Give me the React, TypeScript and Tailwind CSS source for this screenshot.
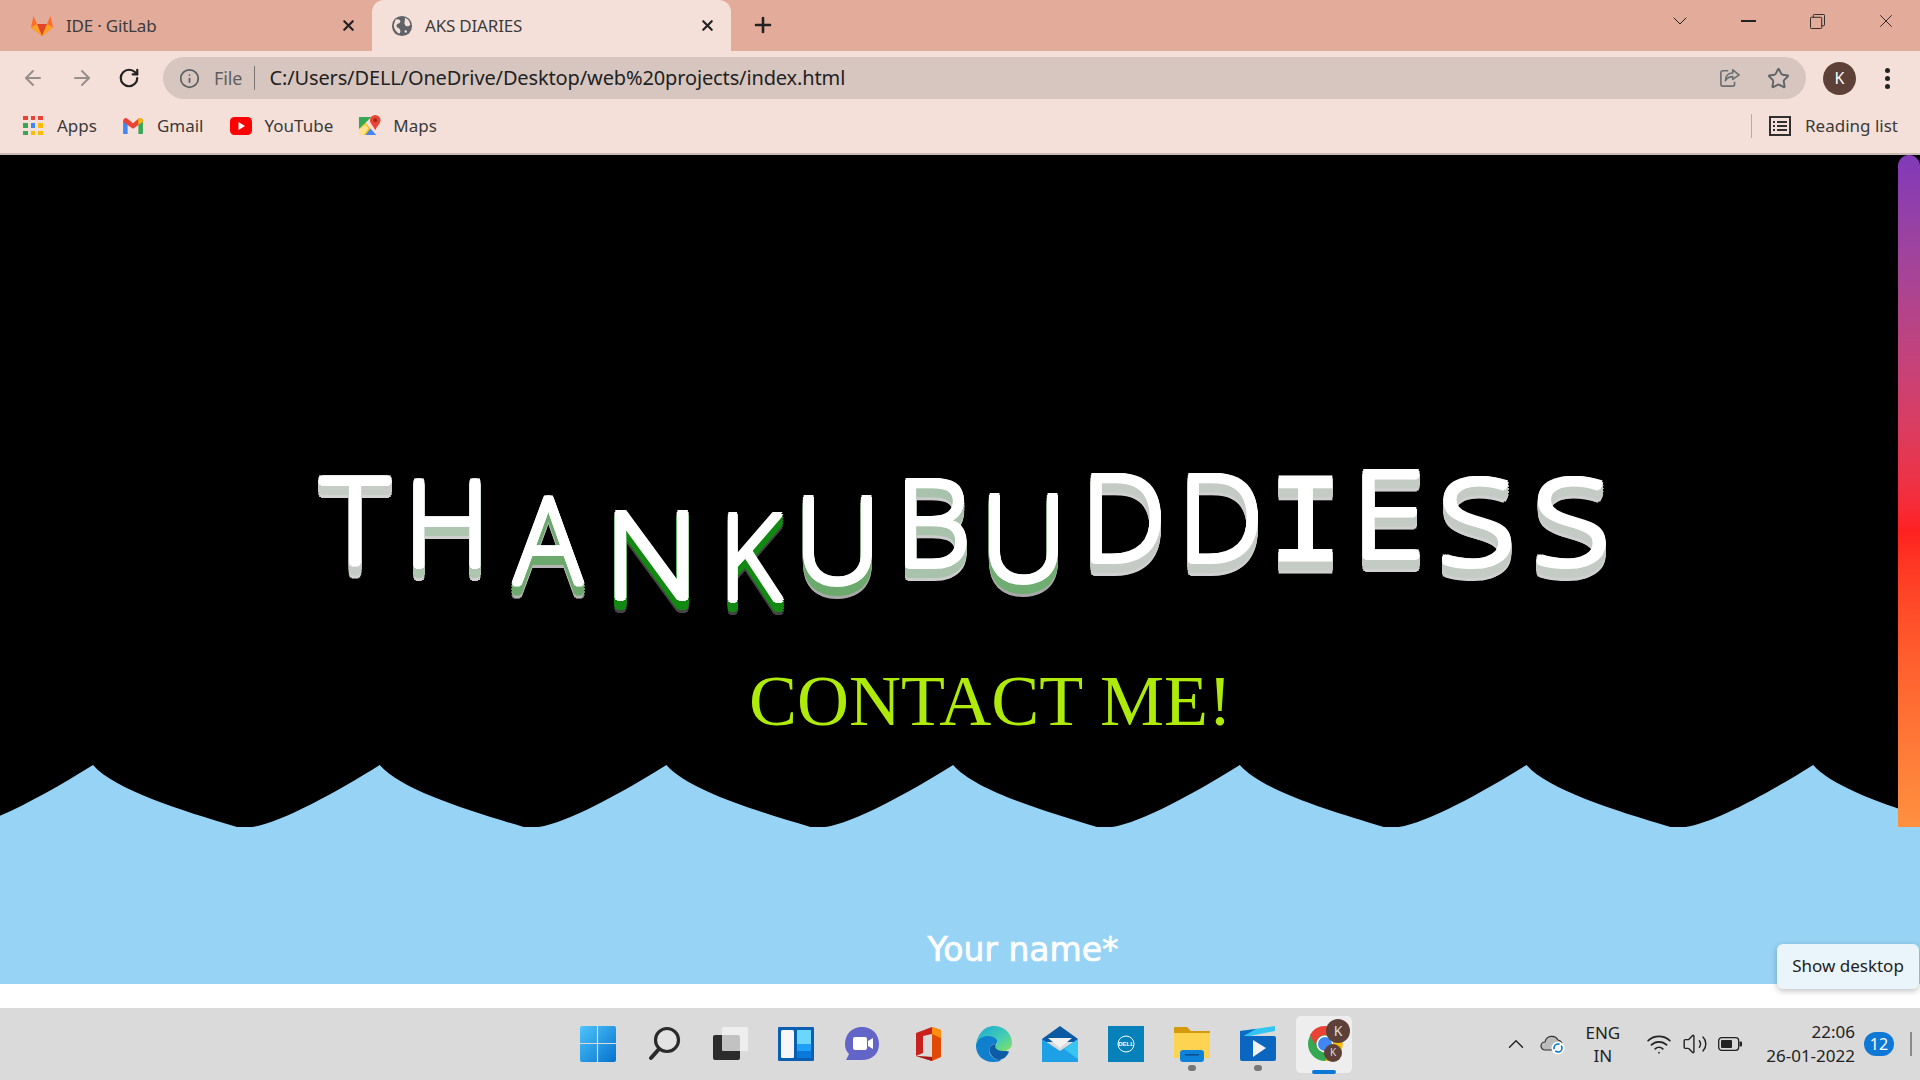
import { ArrowLeft, ArrowRight, ChevronDown, ChevronUp, Info, Plus, RotateCw, Star, Volume2, Wifi, X } from "lucide-react";

const letters = [
  { ch: "T", cls: "w-[78px] mt-[6px] scale-x-[1.1] [--c:#c5cbc5] [--g:#d4d4d4]" },
  { ch: "H", cls: "w-[76px] ml-[15px] mt-[9px] [--c:#aec5b0] [--g:#cfcfcf]" },
  { ch: "A", cls: "w-[70px] ml-[28px] mt-[26px] scale-x-[0.95] [--c:#6ca96c] [--g:#b5b5b5]" },
  { ch: "N", cls: "w-[83px] ml-[27px] mt-[41px] scale-x-[1.1] [--c:#128a12] [--g:#444444]" },
  { ch: "K", cls: "w-[59px] ml-[28px] mt-[43px] scale-x-[0.9] [--c:#128a12] [--g:#444444]" },
  { ch: "U", cls: "w-[71px] ml-[22px] mt-[26px] [--c:#6ca96c] [--g:#a8a8a8]" },
  { ch: "B", cls: "w-[58px] ml-[31px] mt-[9px] [--c:#a9c2ab] [--g:#cccccc]" },
  { ch: "U", cls: "w-[73px] ml-[25px] mt-[24px] [--c:#70ad72] [--g:#a8a8a8]" },
  { ch: "D", cls: "w-[71px] ml-[28px] mt-[4px] [--c:#c4cac4] [--g:#d0d0d0]" },
  { ch: "D", cls: "w-[71px] ml-[26px] mt-[4px] [--c:#c4cac4] [--g:#d0d0d0]" },
  { ch: "I", cls: "w-[57px] ml-[21px] mt-[16px] font-['Liberation_Mono'] text-[126px] [text-shadow:none] [-webkit-text-stroke:3px_white] [--c:#c4cac4] [--g:#d0d0d0]" },
  { ch: "E", cls: "w-[63px] ml-[23px] mt-[0px] scale-x-[1.1] [--c:#c4cac4] [--g:#d0d0d0]" },
  { ch: "S", cls: "w-[71px] ml-[21px] mt-[8px] scale-x-[1.2] [--c:#c4cac4] [--g:#d0d0d0]" },
  { ch: "S", cls: "w-[70px] ml-[24px] mt-[8px] scale-x-[1.2] [--c:#c4cac4] [--g:#d0d0d0]" },
];

// one wave period is 286.7px wide, the peak of the first one sits at x=93
const wavePath = (() => {
  let d = "M0,62 L-194,62";
  for (let i = -1; i < 7; i++) {
    const o = i * 286.7;
    d += ` L${93 + o},0 C${115 + o},25 ${180 + o},45 ${237 + o},62 L${252 + o},62 C${280 + o},58 ${335 + o},28 ${379.7 + o},0`;
  }
  return d + " L1920,62 Z";
})();

function GitlabIcon() {
  return (
    <svg viewBox="0 0 24 24" className="w-[24px] h-[24px]">
      <path d="M12 22 L1 13.5 L3.5 2 L7 10 H17 L20.5 2 L23 13.5 Z" fill="#fc6d26" />
      <path d="M12 22 L7 10 H17 Z" fill="#e24329" />
      <path d="M1 13.5 L7 10 L12 22 Z M23 13.5 L17 10 L12 22 Z" fill="#fca326" />
    </svg>
  );
}

function GlobeIcon() {
  return (
    <svg viewBox="0 0 24 24" className="w-[22px] h-[22px]">
      <circle cx="12" cy="12" r="11" fill="#5f6368" />
      <path d="M5 5 C9 4 11 6 10 8 C9 10 6 9 6 12 C6 14 9 14 10 16 C11 19 9 21 8 20 C5 18 3 14 3 11 Z M15 3 C19 4 21 8 21 11 C19 13 16 13 15 10 C14 7 16 6 15 3 Z M15 17 C17 16 18 17 17 19 C16 20 14 19 15 17 Z" fill="#f5e0d9" />
    </svg>
  );
}

function AppsIcon() {
  const colors = ["#ea4335", "#ea4335", "#ea4335", "#34a853", "#4285f4", "#fbbc05", "#34a853", "#fbbc05", "#fbbc05"];
  return (
    <div className="w-[20px] h-[20px] grid grid-cols-3 gap-[3px]">
      {colors.map((c, i) => (
        <div key={i} className="w-[4.6px] h-[4.6px]" style={{ background: c }} />
      ))}
    </div>
  );
}

function GmailIcon() {
  return (
    <svg viewBox="0 0 24 20" className="w-[22px] h-[18px]">
      <path d="M1 4 V18 a1 1 0 0 0 1 1 H6 V8 Z" fill="#4285f4" />
      <path d="M23 4 V18 a1 1 0 0 1 -1 1 H18 V8 Z" fill="#34a853" />
      <path d="M1 5 C1 1 4 0 6 2 L12 7 L18 2 C20 0 23 1 23 5 L18 9 L12 13 L6 9 Z" fill="#ea4335" />
      <path d="M18 2 C20 0 23 1 23 5 L18 9 Z" fill="#fbbc05" />
    </svg>
  );
}

function YoutubeIcon() {
  return (
    <svg viewBox="0 0 22 18" className="w-[22px] h-[18px]">
      <rect width="22" height="18" rx="4.5" fill="#f00" />
      <path d="M8.5 5 L15 9 L8.5 13 Z" fill="#fff" />
    </svg>
  );
}

function MapsIcon() {
  return (
    <svg viewBox="0 0 24 24" className="w-[23px] h-[23px]">
      <path d="M1 3 H14 L1 16 Z" fill="#34a853" />
      <path d="M1 16 L8 9 L18 22 H3 Z" fill="#fbbc05" />
      <path d="M8 22 L13 15 L19 22 Z" fill="#4285f4" />
      <path d="M1 16 L1 22 H6 L11 15 L8 11 Z" fill="#fde293" />
      <path d="M18 1 A5.5 5.5 0 0 1 23.5 6.5 C23.5 10 20 12 18 17 C16 12 12.5 10 12.5 6.5 A5.5 5.5 0 0 1 18 1 Z" fill="#ea4335" />
      <circle cx="18" cy="6.5" r="2" fill="#a52714" />
    </svg>
  );
}

function ShareIcon() {
  return (
    <svg viewBox="0 0 22 22" className="w-[22px] h-[20px]" fill="none" stroke="#6a6f70" strokeWidth="1.8" strokeLinejoin="round">
      <path d="M9 3 H3 a2 2 0 0 0 -2 2 V18 a2 2 0 0 0 2 2 H14 a2 2 0 0 0 2 -2 V15" />
      <path d="M14 2 L21 7.5 L14 12.5 V9.5 C10 9.5 7.5 11 6 14 C6 9 9 5.5 14 5.5 Z" />
    </svg>
  );
}

function ReadingListIcon() {
  return (
    <svg viewBox="0 0 22 20" className="w-[22px] h-[20px]" fill="none" stroke="#303030" strokeWidth="2">
      <rect x="1" y="1" width="20" height="18" />
      <path d="M8 6 H18 M8 10 H18 M8 14 H18 M4 6 H6 M4 10 H6 M4 14 H6" />
    </svg>
  );
}

function WinIcon() {
  return (
    <svg viewBox="0 0 36 36" className="w-[36px] h-[36px]">
      <defs>
        <linearGradient id="win" x1="0" y1="0" x2="1" y2="1">
          <stop offset="0" stopColor="#4fc4fb" />
          <stop offset="1" stopColor="#0472ce" />
        </linearGradient>
      </defs>
      <rect width="36" height="36" rx="2" fill="url(#win)" />
      <path d="M0 17.5 H36 M17.5 0 V36" stroke="#dadada" strokeWidth="1.2" />
    </svg>
  );
}

function SearchIcon() {
  return (
    <svg viewBox="0 0 36 36" className="w-[36px] h-[36px]" fill="none" stroke="#2b2b2b">
      <circle cx="21" cy="14" r="11.5" strokeWidth="3.2" fill="#e3e3e3" />
      <path d="M13 23 L5 32" strokeWidth="4" strokeLinecap="round" />
    </svg>
  );
}

function TaskViewIcon() {
  return (
    <svg viewBox="0 0 36 36" className="w-[36px] h-[36px]">
      <rect x="1" y="9" width="27" height="25" rx="2" fill="#2c2c2c" />
      <rect x="10" y="1" width="26" height="24" rx="1" fill="#f4f4f4" fillOpacity="0.75" />
    </svg>
  );
}

function WidgetsIcon() {
  return (
    <svg viewBox="0 0 36 36" className="w-[36px] h-[36px]">
      <rect width="36" height="34" y="1" rx="1" fill="#0c5fb0" />
      <rect x="3" y="4" width="13" height="28" rx="1.5" fill="#f7f7f7" />
      <rect x="19" y="4" width="14" height="14" fill="#6bd7ff" />
      <rect x="19" y="18" width="14" height="7" fill="#1e9ef5" />
      <rect x="19" y="25" width="14" height="7" fill="#0a78dc" />
    </svg>
  );
}

function ChatIcon() {
  return (
    <svg viewBox="0 0 36 36" className="w-[36px] h-[36px]">
      <path d="M18 1 C28 1 35 8 35 18 C35 28 28 34 18 34 H2 L5 28 C2 25 1 22 1 18 C1 8 8 1 18 1 Z" fill="#6264c8" />
      <rect x="9" y="11" width="14" height="13" rx="2" fill="#fff" />
      <path d="M24 15 L29 12 V23 L24 20 Z" fill="#fff" />
    </svg>
  );
}

function OfficeIcon() {
  return (
    <svg viewBox="0 0 30 36" className="w-[30px] h-[36px]">
      <path d="M19 1 L28 4 V31 L19 35 L3 30 L19 31 Z" fill="#e04a06" />
      <path d="M19 1 L28 4 V12 L19 8 Z" fill="#ff8f10" />
      <path d="M19 1 L3 7 V30 L10 27 V10 L19 8 Z" fill="#c9211e" />
      <path d="M3 30 L19 35 V31 Z" fill="#a01a20" />
    </svg>
  );
}

function EdgeIcon() {
  return (
    <svg viewBox="0 0 36 36" className="w-[36px] h-[36px]">
      <defs>
        <linearGradient id="edge" x1="0" y1="0" x2="1" y2="1">
          <stop offset="0" stopColor="#1ba5d8" />
          <stop offset="0.6" stopColor="#46cfb0" />
          <stop offset="1" stopColor="#86e05a" />
        </linearGradient>
      </defs>
      <path d="M18 0 C29 0 36 8 36 17 C36 22 32 25 27 25 C22 25 19 24 19 21 C19 19 22 18 21 15 C19 11 13 11 8 14 C4 16 1 19 0 22 C0 9 8 0 18 0 Z" fill="url(#edge)" />
      <path d="M0 20 C1 11 10 8 17 11 C22 13 22 16 20 18 C14 18 12 23 14 28 C16 32 22 35 26 34 C22 36 19 36 17 36 C7 36 0 29 0 20 Z" fill="#0f7fce" />
      <path d="M14 27 C12 22 15 18 20 18 C18 21 20 25 27 25 C30 25 33 25 33 26 C30 32 26 34 22 34 C19 33 16 31 14 27 Z" fill="#0d5ca8" />
    </svg>
  );
}

function MailIcon() {
  return (
    <svg viewBox="0 0 36 36" className="w-[36px] h-[36px]">
      <path d="M0 13 L18 0 L36 13 V16 H0 Z" fill="#0c59a4" />
      <path d="M6 12 H30 L18 22 Z" fill="#f2f2f2" />
      <path d="M0 13 L18 25 L36 13 V36 H0 Z" fill="#1ea0e6" />
      <path d="M36 13 V33 L22 23 Z" fill="#37c6f4" />
    </svg>
  );
}

function DellIcon() {
  return (
    <svg viewBox="0 0 36 36" className="w-[36px] h-[36px]">
      <rect width="36" height="36" fill="#0681b9" />
      <circle cx="18" cy="18" r="8" fill="none" stroke="#fff" strokeWidth="1" />
      <text x="18" y="20" textAnchor="middle" fontSize="6" fontWeight="700" fill="#fff" fontFamily="Liberation Sans">DELL</text>
    </svg>
  );
}

function FolderIcon() {
  return (
    <svg viewBox="0 0 36 36" className="w-[36px] h-[36px]">
      <path d="M0 2 a1 1 0 0 1 1 -1 H13 L17 5 H36 V12 H0 Z" fill="#d59a0b" />
      <path d="M0 7 H36 V32 H0 Z" fill="#fdd451" />
      <rect x="6" y="24" width="24" height="12" rx="3" fill="#0c82d8" />
      <rect x="11" y="28" width="14" height="1.6" fill="#0a4f90" />
    </svg>
  );
}

function VideoIcon() {
  return (
    <svg viewBox="0 0 36 36" className="w-[36px] h-[36px]">
      <path d="M0 5 L35 0 V5 L0 12 Z" fill="#33c5f3" />
      <path d="M0 5 L16 3 L0 12 Z" fill="#0c6cc4" />
      <rect y="10" width="36" height="25" rx="2" fill="#0b66bf" />
      <path d="M13 14 L26 22 L13 31 Z" fill="#f2f2f2" />
    </svg>
  );
}

function ChromeIcon() {
  return (
    <div className="relative w-[56px] h-[57px] bg-[#eeeeee] rounded-[5px] flex items-center pl-[11px]">
      <svg viewBox="0 0 36 36" className="w-[36px] h-[36px]">
        <circle cx="18" cy="18" r="17" fill="#34a853" />
        <path d="M3 9 A17 17 0 0 1 33 9 H18 A9 9 0 0 0 10 22 Z" fill="#ea4335" />
        <path d="M33 9 A17 17 0 0 1 18 35 L26 22 A9 9 0 0 0 18 9 Z" fill="#fbbc05" />
        <circle cx="18" cy="18" r="8.5" fill="#fff" />
        <circle cx="18" cy="18" r="7" fill="#4285f4" />
      </svg>
      <div className="absolute top-[3px] right-[2px] w-[24px] h-[24px] rounded-full bg-[#5d4037] text-[#ddd] text-[14px] flex items-center justify-center">K</div>
      <div className="absolute bottom-[11px] right-[10px] w-[18px] h-[18px] rounded-full bg-[#5d4037] text-[#ddd] text-[10px] flex items-center justify-center">K</div>
      <div className="absolute -bottom-[1px] left-[16px] w-[24px] h-[4px] rounded-full bg-[#0a78d6]" />
    </div>
  );
}

function Dot() {
  return <div className="absolute -bottom-[9px] left-[14px] w-[8px] h-[6px] rounded-full bg-[#777777]" />;
}

export default function App() {
  return (
    <div className="relative w-full h-screen overflow-hidden flex flex-col font-['Noto_Sans',sans-serif] text-[#222222]">
      {/* tab strip */}
      <div className="h-[51px] bg-[#e3ab9a] flex items-start shrink-0">
        <div className="w-[372px] h-[51px] flex items-center pl-[30px] pr-[15px] text-[17px] text-[#3c3c3c]">
          <GitlabIcon />
          <span className="ml-[12px] flex-1 tracking-[-0.2px]">IDE · GitLab</span>
          <X size={17} strokeWidth={3} className="text-[#222222]" />
        </div>
        <div className="w-[359px] h-[51px] bg-[#f5e0d9] rounded-t-[12px] flex items-center pl-[19px] pr-[15px] text-[17px] text-[#3c3c3c]">
          <GlobeIcon />
          <span className="ml-[12px] flex-1 tracking-[-0.2px]">AKS DIARIES</span>
          <X size={17} strokeWidth={3} className="text-[#222222]" />
        </div>
        <Plus size={24} strokeWidth={2.6} className="ml-[20px] mt-[13px] text-[#222222]" />
        <div className="ml-auto h-[51px] flex items-start">
          <ChevronDown size={24} strokeWidth={1} className="mt-[9px] text-[#222222]" />
          <div className="ml-[49px] mt-[20px] w-[15px] h-[1.5px] bg-[#222222]" />
          <svg viewBox="0 0 16 16" className="ml-[54px] mt-[14px] w-[15px] h-[15px]" fill="none" stroke="#222222" strokeWidth="1">
            <rect x="0.5" y="3.5" width="12" height="12" rx="1" />
            <path d="M3.5 3.5 V1.5 a1 1 0 0 1 1 -1 H14.5 a1 1 0 0 1 1 1 V11.5 a1 1 0 0 1 -1 1 H12.5" />
          </svg>
          <X size={22} strokeWidth={1} className="ml-[50px] mt-[10px] mr-[23px] text-[#222222]" />
        </div>
      </div>

      {/* address bar */}
      <div className="h-[54px] bg-[#f5e0d9] flex items-center shrink-0">
        <ArrowLeft size={24} strokeWidth={2} className="ml-[21px] text-[#968f8c]" />
        <ArrowRight size={24} strokeWidth={2} className="ml-[25px] text-[#968f8c]" />
        <RotateCw size={22} strokeWidth={2.4} className="ml-[24px] text-[#222222]" />
        <div className="ml-[23px] w-[1643px] h-[42px] rounded-full bg-[#d6c6bf] flex items-center">
          <Info size={21} strokeWidth={2} className="ml-[16px] text-[#5a5f60]" />
          <span className="ml-[14px] text-[18px] tracking-[-0.1px] text-[#5e5e5e]">File</span>
          <div className="ml-[12px] w-[1px] h-[24px] bg-[#7a7673]" />
          <span className="ml-[14px] text-[20px] text-[#222222] tracking-[-0.13px]">C:/Users/DELL/OneDrive/Desktop/web%20projects/index.html</span>
          <div className="ml-auto mr-[16px] flex items-center gap-[26px]">
            <ShareIcon />
            <Star size={23} strokeWidth={2} className="text-[#5f6466]" />
          </div>
        </div>
        <div className="ml-[17px] w-[33px] h-[33px] rounded-full bg-[#5d4037] text-white text-[16px] flex items-center justify-center">K</div>
        <div className="ml-[29px] flex flex-col gap-[3px]">
          <div className="w-[5px] h-[5px] rounded-full bg-[#222222]" />
          <div className="w-[5px] h-[5px] rounded-full bg-[#222222]" />
          <div className="w-[5px] h-[5px] rounded-full bg-[#222222]" />
        </div>
      </div>

      {/* bookmarks */}
      <div className="h-[50px] pb-[7px] bg-[#f5e0d9] border-b-2 border-[#c9bab4] flex items-center text-[17px] text-[#3a3a3a] shrink-0">
        <div className="ml-[23px]"><AppsIcon /></div>
        <span className="ml-[14px]">Apps</span>
        <div className="ml-[25px]"><GmailIcon /></div>
        <span className="ml-[13px]">Gmail</span>
        <div className="ml-[26px]"><YoutubeIcon /></div>
        <span className="ml-[13px]">YouTube</span>
        <div className="ml-[25px]"><MapsIcon /></div>
        <span className="ml-[12px]">Maps</span>
        <div className="ml-auto w-[1px] h-[24px] bg-[#b9aca7]" />
        <div className="ml-[17px]"><ReadingListIcon /></div>
        <span className="ml-[14px] mr-[22px]">Reading list</span>
      </div>

      {/* page */}
      <div className="relative flex-1 flex flex-col min-h-0 bg-black">
        <div className="absolute top-0 right-0 w-[22px] h-[672px] rounded-t-[11px] bg-linear-to-b from-[#8139b9] via-[#ff2020] via-[56%] to-[#ff9040]" />
        <div className="h-[610px] shrink-0 flex flex-col">
          <div className="h-[169px] mt-[296px] pl-[316px] flex items-start text-white font-['Open_Sans',sans-serif] font-light text-[120px] leading-[120px]">
            {letters.map((l, i) => (
              <div
                key={i}
                className={`flex justify-center [text-shadow:2.5px_0_0_white,-2.5px_0_0_white,0_2.5px_0_white,0_-2.5px_0_white,1.8px_1.8px_0_white,-1.8px_1.8px_0_white,1.8px_-1.8px_0_white,-1.8px_-1.8px_0_white] [filter:drop-shadow(0_3px_0_var(--c))_drop-shadow(0_3px_0_var(--c))_drop-shadow(0_3px_0_var(--c))_drop-shadow(0_3px_0_var(--g))] ${l.cls}`}
              >
                {l.ch}
              </div>
            ))}
          </div>
          <div className="mt-[45px] pl-[61px] text-center font-['Liberation_Serif',serif] text-[72px] leading-[72px] text-[#aeea0a]">CONTACT ME!</div>
        </div>
        <svg viewBox="0 0 1920 62" className="block w-full h-[62px] shrink-0">
          <path d={wavePath} fill="#97d3f5" />
        </svg>
        <div className="flex-1 bg-[#97d3f5] pl-[126px] pt-[100px] text-center text-white font-['DejaVu_Sans',sans-serif] text-[33px] leading-[46px] [-webkit-text-stroke:0.7px_white]">Your name*</div>
        <div className="h-[24px] bg-white shrink-0" />
      </div>

      {/* taskbar */}
      <div className="h-[72px] bg-[#dadada] flex items-center shrink-0">
        <div className="ml-[580px] flex items-center gap-[30px]">
          <WinIcon />
          <SearchIcon />
          <TaskViewIcon />
          <WidgetsIcon />
          <ChatIcon />
          <div className="w-[36px] flex justify-center"><OfficeIcon /></div>
          <EdgeIcon />
          <MailIcon />
          <DellIcon />
          <div className="relative"><FolderIcon /><Dot /></div>
          <div className="relative"><VideoIcon /><Dot /></div>
          <div className="-ml-[10px]"><ChromeIcon /></div>
        </div>
        <div className="ml-auto flex items-center text-[#222222]">
          <ChevronUp size={26} strokeWidth={1.3} />
          <svg viewBox="0 0 26 22" className="ml-[11px] w-[26px] h-[22px]">
            <path d="M5 17 a4 4 0 0 1 0 -8 a7 7 0 0 1 13 -2 a5 5 0 0 1 4 6 L12 17 Z" fill="#bcbcbc" stroke="#333333" strokeWidth="1.2" />
            <circle cx="18" cy="15" r="6.5" fill="#fff" />
            <circle cx="18" cy="15" r="4" fill="none" stroke="#0a78d6" strokeWidth="1.6" strokeDasharray="9 2" />
          </svg>
          <div className="ml-[20px] text-center text-[17px] leading-[23px]">ENG<br />IN</div>
          <Wifi size={26} strokeWidth={1.6} className="ml-[26px]" />
          <Volume2 size={26} strokeWidth={1.3} className="ml-[10px]" />
          <svg viewBox="0 0 24 14" className="ml-[10px] w-[24px] h-[14px]">
            <rect x="0.7" y="0.7" width="20" height="12.6" rx="3" fill="none" stroke="#222222" strokeWidth="1.3" />
            <rect x="3" y="3" width="11" height="8" rx="1" fill="#222222" />
            <rect x="21.5" y="4.5" width="2.5" height="5" rx="1" fill="#222222" />
          </svg>
          <div className="ml-[24px] text-right text-[17px] leading-[24px]">22:06<br />26-01-2022</div>
          <div className="ml-[9px] w-[30px] h-[24px] rounded-full bg-[#0f78d4] text-white text-[16px] flex items-center justify-center">12</div>
          <div className="ml-[16px] mr-[8px] w-[2px] h-[24px] bg-[#8a8a8a]" />
        </div>
      </div>

      {/* hover tooltip over the taskbar corner */}
      <div className="absolute top-[944px] right-[1px] w-[142px] h-[45px] pb-[2px] bg-[#e9f4fb] rounded-[6px] shadow-[0_2px_6px_rgba(0,0,0,0.25)] flex items-center justify-center text-[17px] text-[#222222]">Show desktop</div>
    </div>
  );
}
